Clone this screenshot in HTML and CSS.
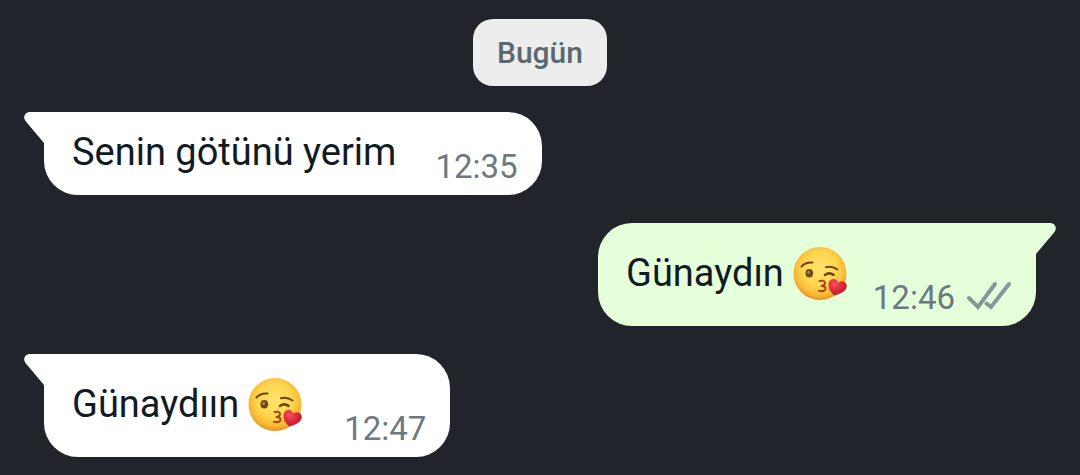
FILE: index.html
```html
<!DOCTYPE html>
<html lang="tr">
<head>
<meta charset="utf-8">
<meta name="viewport" content="width=device-width, initial-scale=1">
<title>Sohbet</title>
<link rel="stylesheet" href="styles.css">
</head>
<body>
<svg class="defs" aria-hidden="true">
  <defs>
    <radialGradient id="face" cx="50%" cy="42%" r="58%">
      <stop offset="0" stop-color="#ffe46c"/>
      <stop offset="0.55" stop-color="#ffd651"/>
      <stop offset="0.85" stop-color="#f7b733"/>
      <stop offset="1" stop-color="#e2921f"/>
    </radialGradient>
    <radialGradient id="heart" cx="35%" cy="30%" r="75%">
      <stop offset="0" stop-color="#f4525c"/>
      <stop offset="0.5" stop-color="#df2a3b"/>
      <stop offset="1" stop-color="#b5182a"/>
    </radialGradient>
    <symbol id="kiss" viewBox="0 0 54 54">
      <circle cx="27" cy="26.500" r="26.500" fill="url(#face)"/>
      <g fill="none" stroke="#6b4714" stroke-linecap="round" stroke-linejoin="round">
        <path d="M8.500 19.500Q12.500 15 19.500 15.500" stroke-width="2"/>
        <path d="M33 20.300Q39 18.500 44.500 22.500" stroke-width="2"/>
        <path d="M32 28Q36 25 40.500 27.800" stroke-width="2.600"/>
      </g>
      <ellipse cx="16.300" cy="26.300" rx="3.800" ry="4.200" fill="#6b4a18"/>
      <circle cx="15.600" cy="25.500" r="1.400" fill="#b98c48"/>
      <path d="M26.500 34Q31.500 32.800 32 36Q32 38.500 28.500 39Q33 39.200 32.500 42Q31.500 45 26 43.800" fill="none" stroke="#a8441b" stroke-width="2" stroke-linecap="round" stroke-linejoin="round"/>
      <path d="M41.500 48.600C38 45.800 34.300 40.500 35.800 35.800C37.300 31 43.600 30.800 45.200 35.600C48.500 33 53 34.200 53.700 38.300C54.400 43.500 48 47 41.500 48.600Z" fill="url(#heart)"/>
    </symbol>
    <symbol id="tail" viewBox="0 0 30 32">
      <path d="M30 0H6C1 0-1.500 5 1.500 9L20 31H30Z"/>
    </symbol>
  </defs>
</svg>
<main class="chat">
  <div class="day">Bugün</div>
  <article class="bubble">
    <svg class="tail" aria-hidden="true"><use href="#tail"/></svg>
    <p class="message">Senin götünü yerim</p>
    <time class="time" datetime="12:35">12:35</time>
  </article>
  <article class="bubble sent">
    <svg class="tail" aria-hidden="true"><use href="#tail"/></svg>
    <p class="message">Günaydın <svg class="emoji" role="img" aria-label="😘"><use href="#kiss"/></svg></p>
    <time class="time" datetime="12:46">12:46</time>
    <svg class="ticks" viewBox="0 0 46 30" role="img" aria-label="İletildi">
      <path d="M3 17L12 26L29 3M20.500 22.500L25 26L43 3"/>
    </svg>
  </article>
  <article class="bubble">
    <svg class="tail" aria-hidden="true"><use href="#tail"/></svg>
    <p class="message">Günaydıın <svg class="emoji" role="img" aria-label="😘"><use href="#kiss"/></svg></p>
    <time class="time" datetime="12:47">12:47</time>
  </article>
</main>
</body>
</html>
```
FILE: styles.css
```css
* {
  box-sizing: border-box;
}

body {
  margin: 0;
  background: #21242a;
  font-family: Roboto, "Noto Sans", sans-serif;
}

.defs {
  position: absolute;
  width: 0;
  height: 0;
}

.chat {
  display: flex;
  flex-direction: column;
  align-items: flex-start;
  gap: 28px;
  padding: 19px 44px 18px;
}

.day {
  align-self: center;
  margin-bottom: -2px;
  padding: 16px 24px;
  border-radius: 20px;
  background: #ededed;
  color: #5b686f;
  font-size: 30px;
  font-weight: 500;
  line-height: 35px;
}

.bubble {
  position: relative;
  display: flex;
  align-items: flex-end;
  padding: 17px 24px 8px 28px;
  border-radius: 0 34px 34px 34px;
  background: #fff;
  color: #111b21;
}

.sent {
  align-self: flex-end;
  border-radius: 34px 0 34px 34px;
  background: #e4ffda;
}

.tail {
  position: absolute;
  top: 0;
  left: -20px;
  width: 30px;
  height: 32px;
  fill: #fff;
}

.sent .tail {
  right: -20px;
  left: auto;
  fill: #e4ffda;
  transform: scaleX(-1);
}

.message {
  display: flex;
  align-items: center;
  gap: 9px;
  margin: 0 39px 12px 0;
  font-size: 38px;
  line-height: 46px;
}

.sent .message {
  margin-right: 23px;
}

.emoji {
  width: 54px;
  height: 54px;
  margin: 7px 3px 5px 0;
}

.time {
  color: #6b7981;
  font-size: 33px;
  line-height: 40px;
}

.ticks {
  width: 46px;
  height: 30px;
  margin: 0 0 7px 11px;
  fill: none;
  stroke: #87989b;
  stroke-width: 4;
  stroke-linecap: round;
}
```
